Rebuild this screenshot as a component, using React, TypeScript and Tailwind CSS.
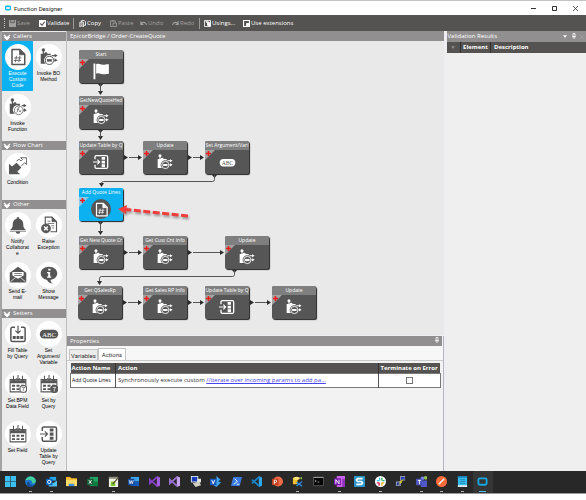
import type { ReactNode } from "react";

type IconProps = { className?: string };

/* ---------- Function icons, drawn in currentColor ---------- */

function CodeIcon({ className }: IconProps) {
  return (
    <svg viewBox="0 0 24 24" className={className} fill="none" stroke="currentColor" strokeWidth="2">
      <path d="M4 2h10.500L21 8.500V22H4z" strokeLinejoin="round" />
      <path d="M14 2v7h7z" fill="currentColor" strokeWidth="1" />
      <path d="M10 10.500l-1.500 8.500M14.500 10.500L13 19M7 13.200h9.500M6.500 16.500H16" strokeWidth="1.100" />
    </svg>
  );
}

function MethodIcon({ className }: IconProps) {
  return (
    <svg viewBox="0 0 24 24" className={className} fill="currentColor">
      <circle cx="4.500" cy="2.500" r="2.300" />
      <path d="M3.700 3h1.600v5H3.700z" />
      <path d="M1 7.500h4.500a2.300 2.300 0 0 1 4.500 0h4.500v2.300a6.800 6.800 0 0 0-7 11.200H1z" />
      <circle cx="12.500" cy="16.500" r="5.400" fill="none" stroke="currentColor" strokeWidth="1.300" />
      <path d="M9.200 14.900h6.600v3.200H9.200z" />
      <path d="M15.500 9.400H20v1.500h-4.500zM18.500 15.500H20V17h-1.500z" />
      <path d="M19.500 7.700l4 2.400-4 2.400zM19.500 13.800l4 2.400-4 2.400z" />
    </svg>
  );
}

function FunctionIcon({ className }: IconProps) {
  return (
    <svg viewBox="0 0 24 24" className={className} fill="currentColor">
      <circle cx="4.500" cy="2.500" r="2.300" />
      <path d="M3.700 3h1.600v5H3.700z" />
      <path d="M1 7.500h4.500a2.300 2.300 0 0 1 4.500 0h4.500v3A6 6 0 0 0 8 21H1z" />
      <circle cx="13" cy="16.500" r="5.800" fill="#fff" stroke="currentColor" strokeWidth="1" />
      <path d="M14 12.500c-2-.5-1.800 1.500-2.200 3.500s-.5 3-1.800 3M10.500 15h3M13.500 16.500l2.500 2.500M16 16.500l-2.500 2.500" fill="none" stroke="currentColor" />
      <path d="M17 9.400h3v1.500h-3zM19 15.500h1V17h-1z" />
      <path d="M19.500 7.700l4 2.400-4 2.400zM19.800 13.800l4 2.400-4 2.400z" />
    </svg>
  );
}

function ConditionIcon({ className }: IconProps) {
  return (
    <svg viewBox="0 0 24 24" className={className}>
      <path d="M0 23V9l4 3.800 6-5.300 6.500 6.500-5.500 5.500L15 23z" fill="currentColor" />
      <path d="M10 5.500L13.500 3l2.500 2.200 2-2-2.500-2.200h8v9L21 7.500l-4.500 4.500" fill="none" stroke="currentColor" strokeWidth="1.200" />
    </svg>
  );
}

function BellIcon({ className }: IconProps) {
  return (
    <svg viewBox="0 0 24 24" className={className} fill="currentColor">
      <path d="M12 1.500a1.800 1.800 0 0 1 1.800 2C17.500 4.500 19 7.500 19 11c0 4 1 5.500 3.500 7.500h-21C4 16.500 5 15 5 11c0-3.500 1.500-6.500 5.200-7.500a1.800 1.800 0 0 1 1.800-2z" />
      <path d="M1 19.500h22v1H1zM9 21h6a3 2.500 0 0 1-6 0z" />
    </svg>
  );
}

function ExceptionIcon({ className }: IconProps) {
  return (
    <svg viewBox="0 0 24 24" className={className} fill="none" stroke="currentColor">
      <path d="M7 11V1.500h9l6 6V21H14" strokeWidth="1.500" />
      <path d="M16 1.500v6h6z" fill="currentColor" />
      <path d="M10 7h4M10 10h9M15 13h4M16 16h3" />
      <circle cx="8" cy="16.500" r="6" fill="currentColor" />
      <path d="M5.500 14l5 5M10.500 14l-5 5" stroke="#fff" strokeWidth="2" />
    </svg>
  );
}

function MailIcon({ className }: IconProps) {
  return (
    <svg viewBox="0 0 24 24" className={className} fill="currentColor">
      <path d="M1 9L12 1l11 8v13H1z" />
      <path d="M4.500 8h15v4.500L12 17l-7.500-4.500z" fill="#fff" />
      <path d="M7 9.500h10v1H7zM7 12h10v1H7z" />
      <path d="M2 21l7-6M22 21l-7-6" stroke="#fff" />
    </svg>
  );
}

function MessageIcon({ className }: IconProps) {
  return (
    <svg viewBox="0 0 24 24" className={className}>
      <path d="M12 1c6 0 11 3.800 11 8.800 0 4.700-4 8-9 8.700 0 2 1 3.500 3 4.500-4 0-6.500-1.500-7.500-4.500C4.500 17.700 1 14.500 1 9.800 1 4.800 6 1 12 1z" fill="currentColor" />
      <path d="M11 3.500h3v2.500h-3zM9.500 8h4v6H15v1.500H9.500V14h1.500V9.500H9.500z" fill="#fff" />
    </svg>
  );
}

function FillTableIcon({ className }: IconProps) {
  return (
    <svg viewBox="0 0 24 24" className={className} fill="none" stroke="currentColor" strokeWidth="2">
      <path d="M8 3H4.500a2 2 0 0 0-2 2v15a2 2 0 0 0 2 2h15a2 2 0 0 0 2-2V5a2 2 0 0 0-2-2H16" />
      <path d="M12 1v9M8.500 7.500L12 11l3.500-3.500" strokeWidth="1.600" />
      <path d="M5 14.500h4v4H5zM10 14.500h4v4h-4zM15 14.500h4v4h-4z" fill="currentColor" stroke="none" />
    </svg>
  );
}

function UpdateTableIcon({ className }: IconProps) {
  return (
    <svg viewBox="0 0 24 24" className={className} fill="none" stroke="currentColor" strokeWidth="2">
      <path d="M3 8V4.500a2 2 0 0 1 2-2h15a2 2 0 0 1 2 2v15a2 2 0 0 1-2 2H5a2 2 0 0 1-2-2V16" />
      <path d="M0 12h9M6.500 8.500L10 12l-3.500 3.500" strokeWidth="1.600" />
      <path d="M13 4.500h5v4.200h-5zM13 10h5v4.200h-5zM13 15.500h5v4.200h-5z" fill="currentColor" stroke="none" />
    </svg>
  );
}

function FieldIcon({ className, badge }: IconProps & { badge?: "bpm" | "query" }) {
  return (
    <svg viewBox="0 0 24 24" className={className} fill="none" stroke="currentColor" strokeWidth="1.400">
      <path d="M1.500 6h21v16.500h-21z" />
      <path d="M1.500 7h21v4h-21z" fill="currentColor" stroke="none" />
      <path d="M6 1v7M3.500 5.500L6 8l2.500-2.500M12 0v7M9.500 4.500L12 7l2.500-2.500M18 1v7M15.500 5.500L18 8l2.500-2.500" />
      <path d="M4 13h4v2.500H4zM10 13h4v2.500h-4zM16 13h4v2.500h-4zM4 17.500h4V20H4zM10 17.500h4V20h-4zM16 17.500h4V20h-4z" fill="currentColor" stroke="none" />
      {badge === "bpm" && (
        <>
          <circle cx="19" cy="18.500" r="4.500" fill="#fff" />
          <path d="M17 16.500h4L19 19v2" strokeWidth="1" />
        </>
      )}
      {badge === "query" && (
        <>
          <circle cx="19" cy="18.500" r="4.800" fill="currentColor" />
          <path d="M17 16.500h4L19 19v3" stroke="#fff" strokeWidth="1" />
        </>
      )}
    </svg>
  );
}

function AbcIcon({ className, inverted }: IconProps & { inverted?: boolean }) {
  return (
    <svg viewBox="0 0 24 24" className={className}>
      <rect x="1" y="7" width="22" height="10.500" rx="5.200" fill="currentColor" />
      <text x="12" y="15" textAnchor="middle" className="font-['Liberation_Serif',serif] text-[8px]" fill={inverted ? "#565656" : "#fff"}>
        ABC
      </text>
    </svg>
  );
}

function FlagIcon({ className }: IconProps) {
  return (
    <svg viewBox="0 0 24 24" className={className} fill="currentColor">
      <path d="M2 2h2.500v21H2zM5.500 3c3.500-1.500 6 .8 9 .8 2.500 0 4.500-.8 8-.8v12.500c-3.500.5-5.500.8-8 .8-3 0-5.500-2.300-9-.8z" />
    </svg>
  );
}

/* ---------- Sidebar ---------- */

type Tool = { label: string; icon: ReactNode; active?: boolean };

const iconSize = "size-[18px]";

const groups: { title: string; tools: Tool[] }[] = [
  {
    title: "Callers",
    tools: [
      { label: "Execute Custom Code", icon: <CodeIcon className={iconSize} />, active: true },
      { label: "Invoke BO Method", icon: <MethodIcon className={iconSize} /> },
      { label: "Invoke Function", icon: <FunctionIcon className={iconSize} /> },
    ],
  },
  { title: "Flow Chart", tools: [{ label: "Condition", icon: <ConditionIcon className={iconSize} /> }] },
  {
    title: "Other",
    tools: [
      { label: "Notify Collaborate", icon: <BellIcon className={iconSize} /> },
      { label: "Raise Exception", icon: <ExceptionIcon className={iconSize} /> },
      { label: "Send E-mail", icon: <MailIcon className={iconSize} /> },
      { label: "Show Message", icon: <MessageIcon className={iconSize} /> },
    ],
  },
  {
    title: "Setters",
    tools: [
      { label: "Fill Table by Query", icon: <FillTableIcon className={iconSize} /> },
      { label: "Set Argument/ Variable", icon: <AbcIcon className="size-5" /> },
      { label: "Set BPM Data Field", icon: <FieldIcon badge="bpm" className={iconSize} /> },
      { label: "Set by Query", icon: <FieldIcon badge="query" className={iconSize} /> },
      { label: "Set Field", icon: <FieldIcon className={iconSize} /> },
      { label: "Update Table by Query", icon: <UpdateTableIcon className={iconSize} /> },
    ],
  },
];

function Sidebar() {
  return (
    <aside className="w-[67px] shrink-0 border-r border-l-2 border-r-[#bdbdbd] border-l-[#a3a3a3] bg-[#ebebeb] pt-px font-['Liberation_Sans',sans-serif]">
      {groups.map((group) => (
        <section key={group.title}>
          <h2 className="flex h-[9px] items-center gap-[2px] bg-[#918f8f] pl-px font-['Open_Sans',sans-serif] text-[6px] text-white">
            <svg viewBox="0 0 8 8" className="size-2" fill="none" stroke="#fff" strokeWidth="1.500">
              <path d="M1 2l3 3 3-3M1.500 4L4 6.500 6.500 4" />
            </svg>
            {group.title}
          </h2>
          <div className="grid grid-cols-2 pr-0.5">
            {group.tools.map((tool) => (
              <button
                key={tool.label}
                className={`flex h-[50px] flex-col items-center px-[3px] pt-[3px] text-[5px] leading-[6px] ${
                  tool.active ? "bg-[#0bb1f0] text-white" : "text-black"
                }`}
              >
                <span className="flex size-[26px] shrink-0 items-center justify-center rounded-full bg-white text-[#565656]">
                  {tool.icon}
                </span>
                <span className="w-6 break-words">{tool.label}</span>
              </button>
            ))}
          </div>
        </section>
      ))}
    </aside>
  );
}

/* ---------- Flow canvas ---------- */

type NodeKind = "start" | "method" | "table" | "abc" | "code";
type FlowNode = { x: number; y: number; label: string; kind: NodeKind };

const nodes: FlowNode[] = [
  { x: 12, y: 9, label: "Start", kind: "start" },
  { x: 12, y: 55, label: "GetNewQuoteHed", kind: "method" },
  { x: 12, y: 100, label: "Update Table by Q", kind: "table" },
  { x: 76, y: 100, label: "Update", kind: "method" },
  { x: 138, y: 100, label: "Set Argument/Vari", kind: "abc" },
  { x: 12, y: 147, label: "Add Quote Lines", kind: "code" },
  { x: 12, y: 195, label: "Get New Quote Cr", kind: "method" },
  { x: 76, y: 195, label: "Get Cust Cnt Info", kind: "method" },
  { x: 158, y: 195, label: "Update", kind: "method" },
  { x: 11, y: 245, label: "Get QSalesRp", kind: "method" },
  { x: 76, y: 245, label: "Get Sales RP Info", kind: "method" },
  { x: 138, y: 245, label: "Update Table by Q", kind: "table" },
  { x: 205, y: 245, label: "Update", kind: "method" },
];

const nodeIcons: Record<NodeKind, ReactNode> = {
  start: <FlagIcon className="size-[18px]" />,
  method: <MethodIcon className="size-4" />,
  table: <UpdateTableIcon className="size-4" />,
  abc: <AbcIcon inverted className="size-[17px]" />,
  code: (
    <span className="flex size-5 items-center justify-center rounded-full bg-[#565656]">
      <CodeIcon className="size-[15px]" />
    </span>
  ),
};

function Node({ node }: { node: FlowNode }) {
  const selected = node.kind === "code";
  return (
    <div
      className={`absolute h-[33px] w-11 overflow-hidden rounded-[2px] text-white shadow-[1px_1px_1px_#222] ${
        selected ? "bg-[#0bb1f0]" : "bg-[#565656]"
      }`}
      style={{ left: node.x, top: node.y }}
    >
      <div
        className={`flex h-[9px] items-center justify-center text-[5px] whitespace-nowrap ${
          selected ? "bg-[#0bb1f0]" : "bg-[#7f7f7f]"
        }`}
      >
        {node.label}
      </div>
      <div className="relative flex h-6 items-center justify-center">
        <svg viewBox="0 0 10 10" className="absolute top-0 left-0 size-[10px]">
          <path d="M0 0h10L0 10z" fill={selected ? "#8ccbe6" : "#a3a3a3"} />
          <path d="M3.500 1v5M1 3.500h5" stroke="#f01818" strokeWidth="1.500" />
        </svg>
        {nodeIcons[node.kind]}
      </div>
    </div>
  );
}

const downLinks = [
  { x: 33, y: 43, end: 54 },
  { x: 33, y: 89, end: 99 },
  { x: 33, y: 181, end: 194 },
];

const rightLinks = [
  { x: 57, y: 116, end: 75 },
  { x: 121, y: 116, end: 137 },
  { x: 57, y: 211, end: 75 },
  { x: 121, y: 211, end: 157 },
  { x: 56, y: 261, end: 75 },
  { x: 121, y: 261, end: 137 },
  { x: 183, y: 261, end: 204 },
];

const bentLinks = [
  { x: 147, y: 134, mid: 140, toX: 34, end: 146 },
  { x: 167, y: 229, mid: 235, toX: 32, end: 244 },
];

function Links() {
  return (
    <svg viewBox="0 0 377 294" className="absolute top-0 left-0 h-[294px] w-[377px]" fill="#2b2b2b">
      {downLinks.map(({ x, y, end }) => (
        <g key={y}>
          <path d={`M${x - 2} ${y}h5l-2.500 3zM${x - 2} ${end - 4}h5l-2.500 4z`} />
          <path d={`M${x + 0.5} ${y}V${end - 3}`} stroke="#555" />
        </g>
      ))}
      {rightLinks.map(({ x, y, end }) => (
        <g key={`${x}-${y}`}>
          <path d={`M${x} ${y - 2}v5l4-2.500zM${end - 4} ${y - 2}v5l4-2.500z`} />
          <path d={`M${x + 5} ${y + 0.5}H${end - 4}`} stroke="#555" />
        </g>
      ))}
      {bentLinks.map(({ x, y, mid, toX, end }) => (
        <g key={y}>
          <path d={`M${x - 2} ${y}h5l-2.500 3zM${toX - 2} ${end - 4}h5l-2.500 4z`} />
          <path
            d={`M${x + 0.5} ${y}V${mid - 1.5}q0 2-2 2H${toX + 2.5}q-2 0-2 2V${end - 3}`}
            fill="none"
            stroke="#555"
          />
        </g>
      ))}
    </svg>
  );
}

function Canvas() {
  return (
    <section className="flex flex-1 flex-col">
      <h1 className="h-[10px] bg-[#918f8f] pl-[3px] text-[6px] leading-[10px] text-white">
        EpicorBridge / Order-CreateQuote
      </h1>
      <div className="relative min-h-[294px] flex-1 overflow-hidden bg-[#e9e9e9]">
        <Links />
        {nodes.map((node) => (
          <Node key={`${node.x}-${node.y}`} node={node} />
        ))}
        {/* Callout arrow */}
        <svg viewBox="0 0 74 18" className="absolute top-[162px] left-[50px] h-[18px] w-[74px] drop-shadow-[1px_2px_1px_#999]">
          <path d="M71 13L9 6.500" stroke="#f13c3c" strokeWidth="3" strokeDasharray="7 2.500" />
          <path d="M1 6l9-4-1 9z" fill="#f13c3c" />
        </svg>
      </div>
    </section>
  );
}

/* ---------- Panels ---------- */

function Pin() {
  return (
    <svg viewBox="0 0 4 6" className="mb-0.5 h-[6px] w-1" fill="none" stroke="#fff" strokeWidth="0.800">
      <path d="M1 .5h2v3H1zM0 3.800h4M2 4v2" />
    </svg>
  );
}

function Properties() {
  return (
    <section className="min-h-[135px] border-r border-[#b5b5c5] bg-[#f2f2f2]">
      <h2 className="mr-px flex h-[10px] items-center justify-between bg-[#918f8f] pr-[3px] pl-[3px] text-[6px] text-white">
        Properties
        <Pin />
      </h2>
      <div
        role="tablist"
        className="flex h-[15px] items-end border-b border-[#c9c9c9] bg-[#f7f7f7] pl-0.5 font-['Roboto',sans-serif] text-[6px] text-[#333]"
      >
        <button role="tab" aria-selected="false" className="h-[11px] border border-b-0 border-[#c4c4c4] bg-[#ececec] px-px">
          Variables
        </button>
        <button role="tab" aria-selected="true" className="h-3 border border-b-0 border-[#c4c4c4] bg-white px-[3px]">
          Actions
        </button>
      </div>
      <div className="pt-0.5 pr-0.5 pl-[3px]">
        <table className="w-full table-fixed border-collapse text-left text-[6px] leading-[8px]">
          <thead className="bg-[#555351] text-white">
            <tr className="h-[10px]">
              <th className="w-[45px] border-r border-[#333] pl-px whitespace-nowrap">Action Name</th>
              <th className="pl-[2px]">Action</th>
              <th className="w-[62px] border-l border-[#333] pl-[2px] whitespace-nowrap">Terminate on Error</th>
            </tr>
          </thead>
          <tbody className="bg-white text-[#333]">
            <tr className="h-[14px] border border-[#777]">
              <td className="border-r border-[#555] pl-px text-[5px] whitespace-nowrap text-black">Add Quote Lines</td>
              <td className="pl-[2px] whitespace-nowrap">
                Synchronously execute custom{" "}
                <a href="#code" className="text-[#4646f0] underline">
                  //iterate over incoming params to add pa...
                </a>
              </td>
              <td className="border-l border-[#555] text-center">
                <input
                  type="checkbox"
                  aria-label="Terminate on Error"
                  className="mx-auto block size-[7px] appearance-none border border-[#777] bg-white"
                />
              </td>
            </tr>
          </tbody>
        </table>
      </div>
    </section>
  );
}

function ValidationResults() {
  return (
    <aside className="w-[23.8%] shrink-0 bg-[#efefef]">
      <h2 className="flex h-[11px] items-center bg-[#918f8f] pl-px text-[6px] text-white">
        <span className="flex-1">Validation Results</span>
        <svg viewBox="0 0 6 4" className="mr-[5px] h-[3px] w-1">
          <path d="M0 0h6L3 4z" fill="#fff" />
        </svg>
        <Pin />
        <svg viewBox="0 0 6 6" className="mr-0.5 ml-1 size-1" stroke="#a5a3a3">
          <path d="M0 0l6 6M6 0L0 6" />
        </svg>
      </h2>
      <table className="w-full border-collapse text-left text-[6px] leading-[11px] text-white">
        <thead className="bg-[#555351]">
          <tr>
            <th className="w-[14px] border-r border-[#2f2f2f]" aria-label="Filter">
              <svg viewBox="0 0 6 4" className="mx-auto h-[3px] w-1">
                <path d="M0 0h6L3 4z" fill="#8f8f8f" />
              </svg>
            </th>
            <th className="w-[30px] border-r border-[#2f2f2f] pl-0.5">Element</th>
            <th className="pl-[3px]">Description</th>
          </tr>
        </thead>
      </table>
    </aside>
  );
}

/* ---------- Window chrome ---------- */

function TitleBar() {
  return (
    <header className="flex h-[15px] items-center border-t border-[#c4c4c4] bg-white font-['Roboto',sans-serif] text-[6px] text-[#222]">
      <svg viewBox="0 0 7 6" className="mr-[3px] ml-[5px] h-[6px] w-[6px]" fill="none" stroke="#1ab5ea" strokeWidth="1.600">
        <rect x="0.800" y="1" width="5.400" height="4" rx="0.800" />
      </svg>
      <span className="flex-1">Function Designer</span>
      <div className="flex gap-4 pr-2">
        <button aria-label="Minimize">
          <svg viewBox="0 0 5 5" className="size-[5px]" stroke="#333">
            <path d="M0 2.500h5" />
          </svg>
        </button>
        <button aria-label="Maximize">
          <svg viewBox="0 0 5 5" className="size-[5px]" fill="none" stroke="#333">
            <path d="M0.500 0.500h4v4h-4z" />
          </svg>
        </button>
        <button aria-label="Close">
          <svg viewBox="0 0 5 5" className="size-[5px]" stroke="#333" strokeWidth="0.800">
            <path d="M0 0l5 5M5 0L0 5" />
          </svg>
        </button>
      </div>
    </header>
  );
}

function ToolButton({ label, disabled, width, children }: { label: string; disabled?: boolean; width: string; children: ReactNode }) {
  return (
    <button disabled={disabled} className={`flex shrink-0 items-center gap-px whitespace-nowrap ${width} ${disabled ? "text-[#a3a1a0]" : "text-white"}`}>
      <svg viewBox="0 0 8 8" className="size-[7px] shrink-0" fill="none" stroke="currentColor">
        {children}
      </svg>
      {label}
    </button>
  );
}

function Toolbar() {
  return (
    <div role="toolbar" className="flex h-4 items-center bg-[#555351] pl-1 text-[6px]">
      <span className="mr-1 h-[10px] border-l border-dotted border-[#c4c4c4]" />
      <ToolButton label="Save" disabled width="w-[30px]">
        <path d="M0 0h8v8H0zM2 0h3v3H2z" fill="currentColor" />
        <path d="M2 0v3h4V0" stroke="#555351" />
      </ToolButton>
      <ToolButton label="Validate" width="w-[34px]">
        <path d="M0 0h8v8H0z" fill="currentColor" />
        <path d="M1.500 4l2 2 3-4" stroke="#555351" strokeWidth="1.300" />
      </ToolButton>
      <span className="mr-[5px] h-[11px] w-px bg-[#9b9998]" />
      <ToolButton label="Copy" width="w-[31px]">
        <path d="M1 2.500h4V8H1zM3 2.500V.5h3l1.500 1.500v4H5" />
        <path d="M2 4.500h2M2 6h2" />
      </ToolButton>
      <ToolButton label="Paste" disabled width="w-[30px]">
        <path d="M3 7.500H.5V1H6v2M2 1h3M3.500 3.500h4v4h-4z" />
      </ToolButton>
      <ToolButton label="Undo" disabled width="w-[32px]">
        <path d="M1 1.500V5h3M1 4.500c2-2.500 5-2.500 6.500 1" strokeWidth="1.300" />
      </ToolButton>
      <ToolButton label="Redo" disabled width="w-[27px]">
        <path d="M7 1.500V5H4M7 4.500C5 2 2 2 .5 5.500" strokeWidth="1.300" />
      </ToolButton>
      <span className="mr-1 h-[11px] w-px bg-[#9b9998]" />
      <ToolButton label="Usings..." width="w-[39px]">
        <path d="M.5.500h7v7h-7z" />
        <path d="M2 2l2 1v3l3 1V3L4 2z" fill="currentColor" />
      </ToolButton>
      <ToolButton label="Use extensions" width="w-[50px]">
        <path d="M.5.500h7v7h-7z" strokeWidth="1.500" />
        <path d="M4 4h3v3H4z" fill="currentColor" />
      </ToolButton>
    </div>
  );
}

/* ---------- Taskbar ---------- */

type TaskApp = { name: string; open?: boolean; current?: boolean; art: ReactNode };

const apps: TaskApp[] = [
  { name: "Start", art: <path d="M0 0h5.700v5.700H0zM6.300 0H12v5.700H6.300zM0 6.300h5.700V12H0zM6.300 6.300H12V12H6.300z" fill="#3cc0f2" /> },
  {
    name: "Edge",
    open: true,
    art: (
      <>
        <circle cx="6" cy="6" r="5.800" fill="#1b76cf" />
        <path d="M.3 5C1.500 0 9 -1.500 11.500 4c1 3-1 4.500-4 4 2-3-3-5-7.200-3z" fill="#43cf9b" />
        <path d="M5 6c-1 3 2 5 5.500 3.500C9 12 5 12.500 3 10.500 1 8 3 6 5 6z" fill="#154c91" />
      </>
    ),
  },
  {
    name: "Outlook",
    open: true,
    art: (
      <>
        <path d="M4 1h7v4H4z" fill="#28a8ea" />
        <path d="M3 5l4.500 3L12 5v6.500H3z" fill="#50c0f0" />
        <path d="M0 3h7v7H0z" fill="#0a64b8" />
        <circle cx="3.500" cy="6.500" r="1.800" fill="none" stroke="#fff" />
      </>
    ),
  },
  {
    name: "File Explorer",
    art: (
      <>
        <path d="M0 1h4.500L6 2.500h6V11H0z" fill="#f5b92c" />
        <path d="M0 4h12v7H0z" fill="#ffdb68" />
        <path d="M3 8.500h6V11H3z" fill="#348edb" />
      </>
    ),
  },
  {
    name: "Excel",
    art: (
      <>
        <path d="M3 1h9v10H3z" fill="#21a366" />
        <path d="M7 6h5v5H7z" fill="#107c41" />
        <path d="M0 3h7v7H0z" fill="#185c37" />
        <path d="M2 4.500l3 4M5 4.500l-3 4" stroke="#fff" />
      </>
    ),
  },
  {
    name: "Notepad++",
    open: true,
    art: (
      <>
        <path d="M1 1h10v11H1z" fill="#f3f3e6" />
        <path d="M1 1h10v2H1z" fill="#8b8b7d" />
        <path d="M3 6h5v5H3z" fill="#7fcf34" />
        <path d="M11 2L5 9" stroke="#635a3c" strokeWidth="1.500" />
      </>
    ),
  },
  {
    name: "Word",
    art: (
      <>
        <path d="M3 1h9v5H3z" fill="#41a5ee" />
        <path d="M3 6h9v5H3z" fill="#185abd" />
        <path d="M0 3h7v7H0z" fill="#124a9e" />
        <path d="M1.300 4.500l1 4 1.200-3.500 1.200 3.500 1-4" stroke="#fff" strokeWidth="0.800" fill="none" />
      </>
    ),
  },
  {
    name: "Visual Studio",
    art: (
      <>
        <path d="M8.500 0L12 1.500v9L8.500 12z" fill="#a45fe0" />
        <path d="M9 1L1 8V4l8 7" fill="none" stroke="#8440c4" strokeWidth="2" />
      </>
    ),
  },
  {
    name: "Visual Studio Preview",
    art: (
      <>
        <path d="M8.500 0L12 1.500v9L8.500 12z" fill="#c9a4f0" />
        <path d="M9 1L1 8V4l8 7" fill="none" stroke="#9a70d0" strokeWidth="2" />
      </>
    ),
  },
  {
    name: "Remote Desktop",
    art: (
      <>
        <path d="M1 0h8v7H1z" fill="#dbe5f3" />
        <path d="M2 1h6v5H2z" fill="#173bb8" />
        <path d="M3 8l7-2 2 4-6 2z" fill="#cfcfc4" />
        <path d="M8 3h4v4H8z" fill="#e4e4dc" />
      </>
    ),
  },
  {
    name: "Visio",
    art: (
      <>
        <path d="M7 0l4.500 4-4.500 3zM7 5l5 2-5 5-3-2z" fill="#41a5ee" />
        <path d="M0 3h7v7H0z" fill="#185abd" />
        <path d="M2 4.500l1.500 4 1.500-4" stroke="#fff" fill="none" />
      </>
    ),
  },
  {
    name: "PowerShell",
    art: (
      <>
        <path d="M2.500 1H12L9.500 11H0z" fill="#397be0" />
        <path d="M4 3l3 3-4 3M6.500 9h2.500" stroke="#fff" fill="none" />
      </>
    ),
  },
  {
    name: "VS Code",
    art: (
      <>
        <path d="M8.500 0L12 1.500v9L8.500 12z" fill="#2fa8f2" />
        <path d="M9 1L1 8M1 4l8 7" fill="none" stroke="#1b80c4" strokeWidth="2" />
      </>
    ),
  },
  {
    name: "PowerPoint",
    art: (
      <>
        <circle cx="6.500" cy="6" r="5.500" fill="#ed6c47" />
        <path d="M0 3h7v7H0z" fill="#c43e1c" />
        <path d="M2.500 9V4.500h1.300a1.200 1.200 0 0 1 0 2.500H2.500" stroke="#fff" fill="none" />
      </>
    ),
  },
  {
    name: "SQL Server Management Studio",
    open: true,
    art: (
      <>
        <path d="M1 2h5v7H1z" fill="#ecc22e" />
        <ellipse cx="5" cy="2.500" rx="3.500" ry="1.800" fill="#ffe47a" />
        <path d="M5 7l6 4M11 6l-6 5" stroke="#2c8be0" strokeWidth="1.500" />
        <path d="M8 2l3-1v3z" fill="#7bc143" />
      </>
    ),
  },
  {
    name: "Command Prompt",
    art: (
      <>
        <path d="M.5 1.500h11v9H.5z" fill="#050505" stroke="#555" />
        <path d="M.5 1.500h11" stroke="#aaa" />
        <path d="M2 4.500l1.500 1L2 6.500M5 6.500h2" stroke="#ddd" strokeWidth="0.700" fill="none" />
      </>
    ),
  },
  {
    name: "OneNote",
    open: true,
    art: (
      <>
        <path d="M3 0h9v12H3z" fill="#ca64ea" />
        <path d="M9 3h3v9H9z" fill="#9332bf" />
        <path d="M0 2.500h7.500V10H0z" fill="#7719aa" />
        <path d="M2 8.500V4l3.500 4.500V4" stroke="#fff" fill="none" />
      </>
    ),
  },
  {
    name: "Snagit",
    art: (
      <>
        <path d="M0 0h12v12H0z" fill="#2a94c9" />
        <path d="M9.500 2.800H4L2.800 4v1L4 6h4l1.200 1v1L8 9.200H2.500" stroke="#fff" strokeWidth="1.800" fill="none" />
      </>
    ),
  },
  {
    name: "Slack",
    open: true,
    art: (
      <>
        <circle cx="6" cy="6" r="6" fill="#fff" />
        <path d="M5 2v3M2 5h3" stroke="#36c5f0" strokeWidth="1.500" />
        <path d="M7.500 2v3M8 5h2.500" stroke="#2eb67d" strokeWidth="1.500" />
        <path d="M7.500 7.500v3M7 7.500h3" stroke="#ecb22e" strokeWidth="1.500" />
        <path d="M4.500 7.500v3M2 7.500h3" stroke="#e01e5a" strokeWidth="1.500" />
      </>
    ),
  },
  {
    name: "PuTTY",
    art: (
      <>
        <path d="M5.500 0H11v5H5.500zM1 6h5.500v5H1z" fill="#9b9eae" />
        <path d="M6.500 1h4v3h-4zM2 7h4v3H2z" fill="#203cae" />
        <path d="M9 4L5 6.500h2.500L4 9.500" stroke="#f7df2c" fill="none" />
      </>
    ),
  },
  {
    name: "Teams",
    open: true,
    art: (
      <>
        <circle cx="7" cy="2.500" r="2" fill="#7b83eb" />
        <path d="M5 5h7v3.500a3.500 3.500 0 0 1-7 2z" fill="#5059c9" />
        <path d="M0 3h7v7H0z" fill="#4b53bc" />
        <path d="M2 4.800h3.500M3.700 5v4" stroke="#fff" />
        <circle cx="10.500" cy="2" r="2" fill="#92c353" />
      </>
    ),
  },
  {
    name: "Postman",
    open: true,
    art: (
      <>
        <circle cx="6" cy="6" r="6" fill="#ff6c37" />
        <path d="M3 9l6-6" stroke="#fff" strokeWidth="1.500" />
      </>
    ),
  },
  {
    name: "Notepad",
    open: true,
    art: (
      <>
        <path d="M1 0h10v12H1z" fill="#37c0ee" />
        <path d="M1 0h10v2H1z" fill="#1b83ba" />
        <path d="M3 4h6M3 6h6M3 8h6" stroke="#137aad" strokeWidth="0.800" />
        <path d="M1 10h10v2H1z" fill="#dfe8ee" />
      </>
    ),
  },
  {
    name: "Epicor",
    open: true,
    current: true,
    art: <rect x="1.500" y="2.500" width="9" height="7" rx="1.500" fill="none" stroke="#16a7e0" strokeWidth="2" />,
  },
];

function Taskbar() {
  return (
    <nav aria-label="Taskbar" className="flex h-[22px] bg-[#282828] pr-[93px]">
      {apps.map((app) => (
        <button
          key={app.name}
          aria-label={app.name}
          className={`flex flex-1 flex-col items-center justify-between pt-[5px] pb-px ${app.current ? "bg-[#353535]" : ""}`}
        >
          <svg viewBox="0 0 12 12" className="size-[11px]">
            {app.art}
          </svg>
          {app.open && <span className={`h-px ${app.current ? "w-[7px] bg-[#4cc2ff]" : "w-[3px] bg-[#b5b5b5]"}`} />}
        </button>
      ))}
    </nav>
  );
}

export default function App() {
  return (
    <div className="flex min-h-screen flex-col bg-white pb-[6px] font-['Open_Sans',sans-serif]">
      <TitleBar />
      <Toolbar />
      <main className="flex flex-1 bg-[#ededf2]">
        <Sidebar />
        <div className="mr-[3px] flex min-w-0 flex-1 flex-col gap-px">
          <Canvas />
          <Properties />
        </div>
        <ValidationResults />
      </main>
      <div className="border-b border-[#9a9a9a]">
        <Taskbar />
      </div>
    </div>
  );
}
